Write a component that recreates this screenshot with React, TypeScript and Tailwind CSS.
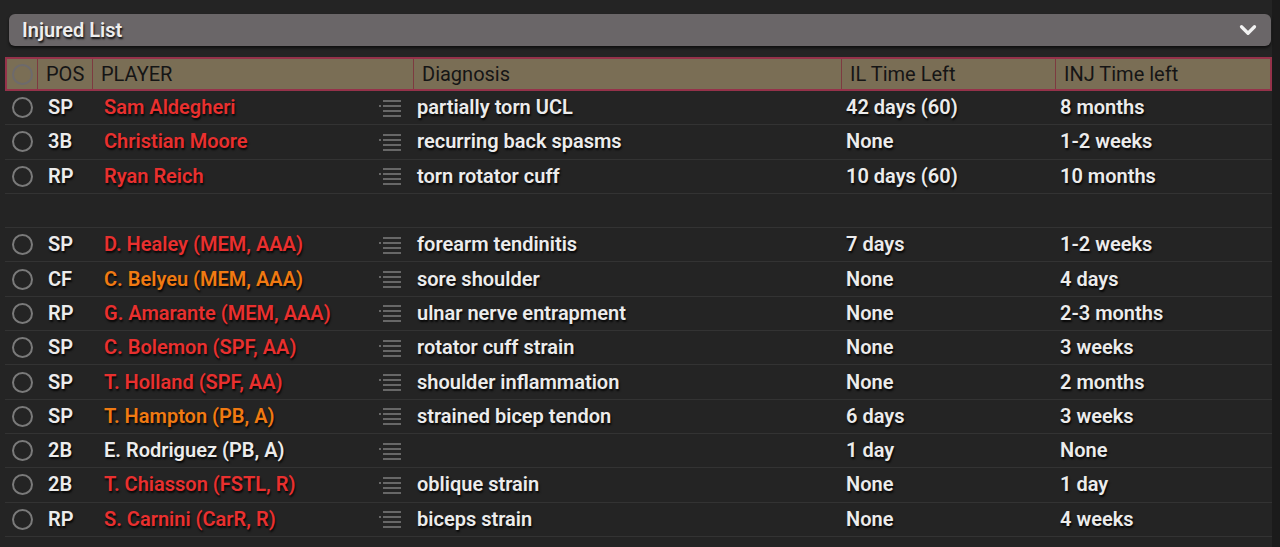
import { ChevronDown } from 'lucide-react';

type Row = {
  pos: string;
  name: string;
  color: 'red' | 'orange' | 'white';
  diag: string;
  il: string;
  inj: string;
};

const rows: (Row | null)[] = [
  { pos: 'SP', name: 'Sam Aldegheri', color: 'red', diag: 'partially torn UCL', il: '42 days (60)', inj: '8 months' },
  { pos: '3B', name: 'Christian Moore', color: 'red', diag: 'recurring back spasms', il: 'None', inj: '1-2 weeks' },
  { pos: 'RP', name: 'Ryan Reich', color: 'red', diag: 'torn rotator cuff', il: '10 days (60)', inj: '10 months' },
  null,
  { pos: 'SP', name: 'D. Healey (MEM, AAA)', color: 'red', diag: 'forearm tendinitis', il: '7 days', inj: '1-2 weeks' },
  { pos: 'CF', name: 'C. Belyeu (MEM, AAA)', color: 'orange', diag: 'sore shoulder', il: 'None', inj: '4 days' },
  { pos: 'RP', name: 'G. Amarante (MEM, AAA)', color: 'red', diag: 'ulnar nerve entrapment', il: 'None', inj: '2-3 months' },
  { pos: 'SP', name: 'C. Bolemon (SPF, AA)', color: 'red', diag: 'rotator cuff strain', il: 'None', inj: '3 weeks' },
  { pos: 'SP', name: 'T. Holland (SPF, AA)', color: 'red', diag: 'shoulder inflammation', il: 'None', inj: '2 months' },
  { pos: 'SP', name: 'T. Hampton (PB, A)', color: 'orange', diag: 'strained bicep tendon', il: '6 days', inj: '3 weeks' },
  { pos: '2B', name: 'E. Rodriguez (PB, A)', color: 'white', diag: '', il: '1 day', inj: 'None' },
  { pos: '2B', name: 'T. Chiasson (FSTL, R)', color: 'red', diag: 'oblique strain', il: 'None', inj: '1 day' },
  { pos: 'RP', name: 'S. Carnini (CarR, R)', color: 'red', diag: 'biceps strain', il: 'None', inj: '4 weeks' },
];

const nameColor = {
  red: 'text-[#e8302f]',
  orange: 'text-[#f07a12]',
  white: 'text-[#ececec]',
};

const rowCols = 'grid grid-cols-[33px_55px_321px_428px_214px_215px]';
const headCols = 'grid grid-cols-[31px_55px_321px_428px_214px_213px]';
const shadow = '[text-shadow:1px_2px_2px_rgba(0,0,0,0.85)]';

function ListIcon() {
  return (
    <svg width="24" height="18" viewBox="0 0 24 18" className="shrink-0">
      <g stroke="#676767" strokeWidth="2">
        <line x1="5" y1="2" x2="23" y2="2" />
        <line x1="1" y1="7" x2="3" y2="7" />
        <line x1="5" y1="7" x2="23" y2="7" />
        <line x1="5" y1="12" x2="23" y2="12" />
        <line x1="5" y1="17" x2="23" y2="17" />
      </g>
    </svg>
  );
}

function Radio({ header }: { header?: boolean }) {
  return (
    <div
      className={`w-[21px] h-[21px] rounded-full border-2 ${header ? 'border-[#6d6a6c]' : 'border-[#7a7a7a]'}`}
    />
  );
}

export default function App() {
  return (
    <div className="w-[1280px] h-[547px] bg-[#1b1b1b] overflow-hidden font-['Roboto',sans-serif]">
      <div className="w-[1272px] h-full bg-[#242424] pt-[14px]">
        <div className="ml-[9px] mr-[1px] h-[32px] rounded-[6px] bg-[#6a6668] shadow-[0_2px_3px_rgba(0,0,0,0.6)] flex items-center justify-between pl-[13px] pr-[10px]">
          <span className={`text-[20px] font-semibold text-[#eeeeee] ${shadow}`}>Injured List</span>
          <ChevronDown size={26} strokeWidth={3} className="text-[#f2f2f2]" />
        </div>

        <div className="ml-[5px] mt-[11px] w-[1267px]">
          <div className={`${headCols} h-[34px] bg-[#7a6e55] border-2 border-[#95324a] text-[20px] leading-none text-[#151515]`}>
            <div className="flex items-center justify-center border-r border-[#7d3a40] pl-[1px]">
              <Radio header />
            </div>
            <div className="flex items-center pl-[8px] border-r border-[#7d3a40]">POS</div>
            <div className="flex items-center pl-[8px] border-r border-[#7d3a40]">PLAYER</div>
            <div className="flex items-center pl-[8px] border-r border-[#7d3a40]">Diagnosis</div>
            <div className="flex items-center pl-[8px] border-r border-[#7d3a40]">IL Time Left</div>
            <div className="flex items-center pl-[8px]">INJ Time left</div>
          </div>

          {rows.map((r, i) =>
            r === null ? (
              <div key={i} className="h-[34.3px] border-b border-[#333333]" />
            ) : (
              <div
                key={i}
                className={`${rowCols} h-[34.3px] border-b border-[#333333] text-[20px] leading-none font-semibold text-[#ececec] ${shadow}`}
              >
                <div className="flex items-center justify-center pl-[2px]">
                  <Radio />
                </div>
                <div className="flex items-center pl-[10px] pb-[1px]">{r.pos}</div>
                <div className="flex items-center justify-between pl-[11px] pr-[12px]">
                  <span className={`pb-[1px] ${nameColor[r.color]}`}>{r.name}</span>
                  <ListIcon />
                </div>
                <div className="flex items-center pl-[3px] pb-[1px]">{r.diag}</div>
                <div className="flex items-center pl-[4px] pb-[1px]">{r.il}</div>
                <div className="flex items-center pl-[4px] pb-[1px]">{r.inj}</div>
              </div>
            )
          )}
        </div>
      </div>
    </div>
  );
}
